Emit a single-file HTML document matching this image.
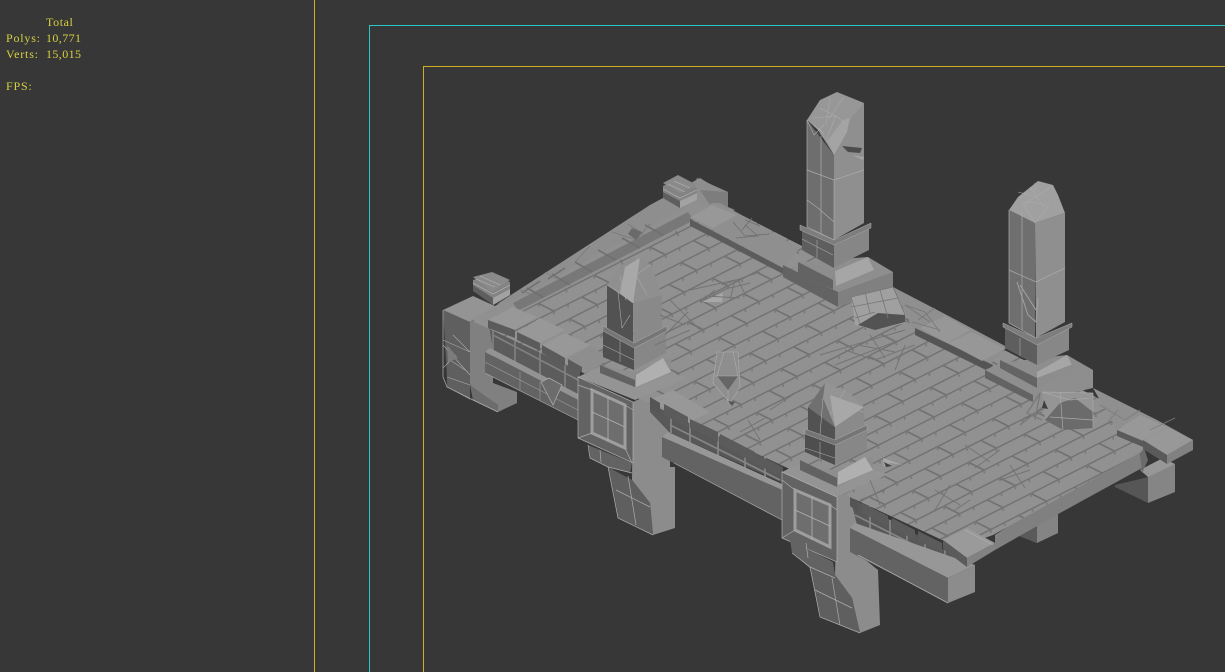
<!DOCTYPE html>
<html><head><meta charset="utf-8"><style>
html,body{margin:0;padding:0;background:#373737;overflow:hidden}
#p{position:relative;width:1225px;height:672px;overflow:hidden;background:#373737}
svg{position:absolute;left:0;top:0}
.f{position:absolute;box-sizing:border-box}
.t{position:absolute;font:12px/14px "Liberation Serif","Noto Serif CJK SC",serif;color:#d8d140;white-space:pre}
</style></head><body><div id="p">
<svg width="1225" height="672" viewBox="0 0 1225 672" fill="none">
<defs>
<pattern id="br" patternUnits="userSpaceOnUse" width="60" height="40" patternTransform="matrix(.93 -.47 .78 .39 700 300)">
<rect width="60" height="40" fill="#919191"/>
<path d="M0 0H60M0 20H60M0 40H60M0 0V20M30 20V40M60 0V20" stroke="#717171" stroke-width="2"/>
<path d="M15 0l-3.500 4.600M45 0l-3.500 4.600M0 20l-3.500 4.600M60 20l-3.500 4.600M30 20l-3.500 4.600M15 40l-3.500 4.600M45 40l-3.500 4.600M30 0l-3.500 4.600" stroke="#787878" stroke-width="1.300"/>
</pattern>
</defs>
<rect x="314" y="0" width="1" height="672" fill="#d0b020"/>
<path d="M369.500 672V25.500H1225" stroke="#28c8c8"/>
<path d="M423.500 672V66.500H1225" stroke="#d0b020"/>

<!-- back right small leg + beam -->
<path d="M1115 485L1148 477V503L1115 487Z" fill="#565656"/>
<path d="M1142 470L1175 464V492L1148 503V477Z" fill="#858585"/>
<path d="M1148 477L1175 464 1163 458 1140 470Z" fill="#979797"/>
<path d="M1017 535L1037 523 1058 513V533L1037 543Z" fill="#848484"/>
<path d="M1017 535L1037 543V525Z" fill="#5a5a5a"/>

<!-- floor side -->
<path d="M1140 453L1060 492 995 535V550L1060 513 1142 468Z" fill="#808080"/>
<path d="M1142 442L1148 460 1142 473 1140 453Z" fill="#6b6b6b"/>

<!-- left block -->
<path d="M443 310L470 322V400L447 387 447 377Z" fill="#5f5f5f"/>
<path d="M470 322L493 313V383L517 392V403L498 412 473 400 470 383Z" fill="#808080"/>
<path d="M473 400L498 412V405L470 385Z" fill="#6c6c6c"/>
<path d="M443 310L473 296 497 307 470 322Z" fill="#949494"/>
<path d="M443 310V377L447 387 473 400 498 412" stroke="#b2b2b2" stroke-width=".7"/>
<path d="M443 340L470 352M447 377L470 385M443 345L470 375M456 355L443 368M470 352L453 335M450 360L468 372" stroke="#ababab" stroke-width=".6"/>
<path d="M447 345L458 358 448 362Z" fill="#7c7c7c"/>

<!-- left wall and beam -->
<path d="M488 320L580 368V397L493 350Z" fill="#5c5c5c"/>
<path d="M493 350V326M515 337V362M540 350V375M565 362V390M493 335L580 381" stroke="#818181" stroke-width="1.600"/>
<path d="M485 352L490 348 580 395 578 400Z" fill="#939393"/>
<path d="M485 352L578 400V420L485 373Z" fill="#636363"/>
<path d="M485 362L578 410M520 372V390M540 382V400" stroke="#9a9a9a" stroke-width=".6"/>
<path d="M485 373L578 420" stroke="#aaa" stroke-width=".7"/>
<path d="M541 382L553 405 562 385 549 378Z" stroke="#aaa" stroke-width=".8" fill="#6c6c6c"/>

<!-- block columns (behind beams) -->
<path d="M633 402L650 394 670 415V467H675V528L653 535 650 503 632 480Z" fill="#8c8c8c"/>
<path d="M837 497L850 491 857 507V553L878 570 880 625 860 633 852 598 835 575Z" fill="#8c8c8c"/>

<!-- front walls/beams -->
<path d="M650 400L783 467V483L670 433 650 412Z" fill="#585858"/>
<path d="M671 408V433M690 419V448M718 432V457M745 445V473M765 456V484M670 425L780 480" stroke="#858585" stroke-width="1.700"/>
<path d="M662 437L668 432 782 484V490Z" fill="#979797"/>
<path d="M662 437L782 490V520L662 457Z" fill="#636363"/>
<path d="M674 463L782 520" stroke="#aaa" stroke-width=".7"/>
<path d="M850 497L967 563 957 572 857 525Z" fill="#585858"/>
<path d="M870 505V533M890 520V545M907 530V553M925 538V565M945 550V572M855 515L960 568" stroke="#858585" stroke-width="1.700"/>
<path d="M850 528L855 523 975 565 948 578Z" fill="#979797"/>
<path d="M850 528L948 578V603L850 552Z" fill="#636363"/>
<path d="M948 578L975 565V592L948 603Z" fill="#8c8c8c"/>
<path d="M858 555L948 603" stroke="#b0b0b0" stroke-width=".8"/>

<!-- floor -->
<path d="M470 320L700 190 728 208 1160 430 1140 453 993 535 965 545 942 540Z" fill="url(#br)"/>
<!-- back-left strip -->
<path d="M470 320L497 307 700 195 735 210 690 224 520 312 490 322Z" fill="#909090"/>
<path d="M513 303L688 212 694 220 518 311Z" fill="#787878"/>
<path d="M497 304L650 205 700 178 716 188 690 205 513 300Z" fill="#8e8e8e"/>
<path d="M527 288L543 297M552 274L570 285M575 262L592 272M598 250L616 260M622 238L640 248M645 225L663 235M540 281L522 293M565 268L548 279" stroke="#707070" stroke-width="1.600"/>
<path d="M612 232L636 240 650 224M628 224L645 235M520 290L535 296M575 262L590 246M545 272L562 282" stroke="#777" stroke-width=".7"/>
<path d="M628 234L636 240 642 232 632 228Z" fill="#6a6a6a"/>
<!-- top back block -->
<path d="M697 178L728 192V208L716 212 690 198Z" fill="#8e8e8e"/>
<path d="M728 192V208L716 214 700 190Z" fill="#7d7d7d"/>

<!-- back-right slabs -->
<path d="M712 203H720L800 248 783 268 690 218Z" fill="#8f8f8f"/>
<path d="M690 217L712 205 737 215 713 228Z" fill="#989898"/>
<path d="M690 219L713 231 783 268V274L712 237 690 226Z" fill="#5c5c5c"/>
<path d="M733 222L745 236 770 234M745 225L758 236 736 238M752 218L742 230M760 226L745 220" stroke="#6e6e6e" stroke-width=".8"/>
<path d="M893 287L943 313 1007 347 985 370 915 332Z" fill="#8f8f8f"/>
<path d="M915 328L993 365 990 372 915 335Z" fill="#555"/>
<path d="M920 328L945 316 970 330 947 343Z" fill="#979797"/>
<path d="M948 343L972 332 1005 349 982 361Z" fill="#979797"/>
<path d="M905 305L925 312 940 332M918 320L935 308" stroke="#777" stroke-width=".8"/>
<!-- end strip -->
<path d="M1093 388L1157 420 1193 440 1167 455 1117 430Z" fill="#8f8f8f"/>
<path d="M1117 430L1140 415 1167 427 1142 440Z" fill="#989898"/>
<path d="M1143 440L1168 427 1193 440 1167 455Z" fill="#989898"/>
<path d="M1143 440L1167 455V464L1143 449Z" fill="#5a5a5a"/>
<path d="M1117 430L1143 441V447L1117 436Z" fill="#5a5a5a"/>
<path d="M1167 455L1193 440V450L1167 464Z" fill="#818181"/>
<path d="M1100 405L1125 420 1140 410M1118 410L1108 422M1150 430L1175 418" stroke="#7d7d7d" stroke-width=".8"/>

<!-- front-left slabs -->
<path d="M488 320L513 307 537 317 515 330Z" fill="#989898"/><path d="M488 320L515 330V338L488 328Z" fill="#5b5b5b"/>
<path d="M517 332L540 318 565 330 540 343Z" fill="#989898"/><path d="M517 332L540 343V351L517 340Z" fill="#5b5b5b"/>
<path d="M542 345L565 333 590 345 565 358Z" fill="#989898"/><path d="M542 345L565 358V366L542 353Z" fill="#5b5b5b"/>
<path d="M568 359L590 346 610 358 590 372Z" fill="#8e8e8e"/><path d="M568 359L582 367V373L568 366Z" fill="#5b5b5b"/>
<path d="M650 400L673 390 710 412 688 423Z" fill="#989898"/><path d="M650 397L660 403V413L650 408Z" fill="#555"/><path d="M664 404L688 417V428L664 415Z" fill="#5b5b5b"/>
<path d="M690 419L718 432V442L690 428Z" fill="#5b5b5b"/>
<path d="M720 434L755 452V463L720 445Z" fill="#5b5b5b"/>
<path d="M752 452L780 467V476L752 462Z" fill="#5b5b5b"/>
<path d="M850 497L858 502V512L850 506Z" fill="#555"/>
<path d="M862 503L888 516V526L862 513Z" fill="#5b5b5b"/>
<path d="M892 518L915 530V540L892 528Z" fill="#5b5b5b"/>
<path d="M918 531L942 543V552L918 541Z" fill="#5b5b5b"/>
<path d="M943 540L967 528 995 543 967 558Z" fill="#9a9a9a"/>
<path d="M943 540L967 558V567L943 549Z" fill="#5b5b5b"/>
<path d="M967 558L995 543V550L967 567Z" fill="#828282"/>
<path d="M965 530L993 545" stroke="#bbb" stroke-width=".5"/>

<!-- small top-left pedestal -->
<path d="M473 280V288L493 305 510 295V282L492 275Z" fill="#838383"/>
<path d="M473 285L493 298V305L473 291Z" fill="#5e5e5e"/>
<path d="M493 298L510 289V295L493 305Z" fill="#a2a2a2"/>
<path d="M473 277L492 272 510 280 492 292Z" fill="#8a8a8a"/>
<path d="M476 279L495 287M480 276L500 285M473 283L493 294 510 285" stroke="#b8b8b8" stroke-width=".6"/>
<!-- small top pedestal -->
<path d="M663 186V196L680 208 697 200V188L678 178Z" fill="#838383"/>
<path d="M663 192L680 201V208L663 198Z" fill="#5e5e5e"/>
<path d="M680 201L697 193V200L680 208Z" fill="#a2a2a2"/>
<path d="M663 183L678 175 697 185 680 193Z" fill="#8a8a8a"/>
<path d="M668 184L685 192M674 181L690 188M663 189L680 198 697 190" stroke="#b8b8b8" stroke-width=".6"/>

<!-- pillar 1 base -->
<path d="M783 277L838 307 893 287V272L868 257 800 262Z" fill="#8e8e8e"/>
<path d="M783 277L838 307V292L783 265Z" fill="#636363"/>
<path d="M838 307L893 287V272L838 292Z" fill="#808080"/>
<path d="M798 262L835 270 874 262V272L833 289 798 275Z" fill="#8d8d8d"/>
<path d="M798 262L833 280V289L798 275Z" fill="#636363"/>
<path d="M835 271L868 257 874 270 836 286Z" fill="#a6a6a6"/>
<path d="M802 250L833 268 869 250V228L834 243 802 228Z" fill="#868686"/>
<path d="M802 228L834 243V268L802 250Z" fill="#5e5e5e"/>
<path d="M817 240V258M802 239L833 255" stroke="#a6a6a6" stroke-width=".6"/>
<!-- pillar 1 shaft -->
<path d="M807 120L834 155V240L807 227Z" fill="#6e6e6e"/>
<path d="M834 155L845 120 864 103V223L834 240Z" fill="#8f8f8f"/>
<path d="M807 120L820 100 837 92 864 103 846 124 834 155 818 130Z" fill="#979797"/>
<path d="M812 129L828 140 843 120 850 118 847 132 834 155 826 138Z" fill="#a4a4a4"/>
<path d="M820 108L836 116 846 124M830 97L826 124M844 97L828 120M812 118L836 116 826 140M814 125L824 134 818 128M807 120L814 135 824 125" stroke="#ababab" stroke-width=".6"/>
<path d="M807 120V227L834 240M821 136V233M807 170L834 180 864 170M807 200L818 208 834 222M834 180V240" stroke="#ababab" stroke-width=".7"/>
<path d="M842 146L862 148 860 153 848 152Z" fill="#4c4c4c"/>
<path d="M852 155L864 157 863 160Z" fill="#a5a5a5"/>
<path d="M800 225L834 240 871 223V228L834 245 800 230Z" fill="#7d7d7d" stroke="#aaa" stroke-width=".5"/>

<!-- pillar 2 -->
<path d="M985 370L1033 402 1093 388V370L1067 355 1000 363Z" fill="#8e8e8e"/>
<path d="M985 370L1033 395V402L985 378Z" fill="#636363"/>
<path d="M1000 360L1037 378V388L1000 368Z" fill="#646464"/>
<path d="M1037 372L1067 355 1073 367 1037 382Z" fill="#a6a6a6"/>
<path d="M1037 378L1073 364V372L1037 388Z" fill="#8d8d8d"/>
<path d="M1005 348L1037 365 1069 350V326L1037 342 1005 326Z" fill="#878787"/>
<path d="M1005 326L1037 342V365L1005 348Z" fill="#5e5e5e"/>
<path d="M1020 338V356" stroke="#a6a6a6" stroke-width=".6"/>
<path d="M1009 210L1035 223V338L1009 323Z" fill="#6f6f6f"/>
<path d="M1035 223L1065 213V322L1036 338Z" fill="#8f8f8f"/>
<path d="M1009 210L1018 197 1038 181 1053 185 1058 195 1065 213 1035 223Z" fill="#a0a0a0"/>
<path d="M1009 210V323L1036 338M1022 210V330M1009 270L1036 282 1065 268" stroke="#aaa" stroke-width=".7"/>
<path d="M1022 201L1049 205M1030 187L1044 207M1049 188L1022 206M1018 192L1038 197M1035 183V194M1022 201L1035 223 1049 205" stroke="#ababab" stroke-width=".6"/>
<path d="M1017 282L1028 315 1036 322 1038 298M1020 285L1036 310" stroke="#a3a3a3" stroke-width="1"/>
<path d="M1003 323L1036 338 1072 323V327L1037 345 1003 327Z" fill="#7d7d7d" stroke="#aaa" stroke-width=".5"/>

<!-- rock 1 -->
<path d="M851 297L893 287 905 315V323L875 330 855 325Z" fill="#a0a0a0"/>
<path d="M858 325L878 313 905 315V322L875 330Z" fill="#535353"/>
<path d="M851 297L893 287 905 315M851 297L860 324M865 292L870 313M851 307L898 298M880 290L888 318M855 318L875 312" stroke="#777" stroke-width=".8"/>
<path d="M905 305L930 322M912 322L940 330" stroke="#777" stroke-width=".8"/>

<!-- rock 2 -->
<path d="M1042 392L1093 393V428L1063 430 1045 420Z" fill="#959595"/>
<path d="M1045 420L1060 403 1075 398 1093 412V428L1063 430Z" fill="#6b6b6b"/>
<path d="M1042 392L1093 393M1042 392L1070 400 1090 398M1060 392L1063 430M1093 393V428M1050 417L1093 420" stroke="#a9a9a9" stroke-width=".7"/>
<path d="M1040 393L1027 413 1042 420M1040 393L1035 420M1020 425L1045 405M1012 424L1042 412" stroke="#777" stroke-width="1.200"/>
<path d="M1044 400L1048 409 1042 408Z" fill="#3f3f3f"/>

<!-- block A -->
<path d="M578 377L600 366 636 388 672 373 688 378 635 400Z" fill="#949494"/>
<path d="M578 377L633 402V463L578 438Z" fill="#636363"/>
<path d="M592 390L625 405V448L592 433Z" fill="#6e6e6e" stroke="#9e9e9e" stroke-width="3"/>
<path d="M608 397V441M592 412L625 427" stroke="#b2b2b2" stroke-width=".8"/>
<path d="M578 377L633 402V463L578 438ZM578 385L592 390M625 405L633 410M592 433L578 438M625 448L632 463" stroke="#adadad" stroke-width=".7"/>
<path d="M588 445L632 463 630 473 608 467 590 458Z" fill="#636363"/>
<path d="M608 467L632 480 650 503 653 535 618 518Z" fill="#5f5f5f"/>
<path d="M588 445L590 458 608 467 618 518 653 535M608 467L632 473M616 490L650 507M628 476L636 525M600 450L601 462" stroke="#adadad" stroke-width=".7"/>

<!-- pillar 3 -->
<path d="M600 365L635 387 671 373V358L634 372Z" fill="#8e8e8e"/>
<path d="M600 365L635 380V387L600 373Z" fill="#626262"/>
<path d="M636 375L663 358 671 372 636 387Z" fill="#b0b0b0"/>
<path d="M603 357L634 370 666 353V328L634 345 603 328Z" fill="#878787"/>
<path d="M603 328L634 345V370L603 357Z" fill="#505050"/>
<path d="M620 340V362M603 345L634 360" stroke="#a6a6a6" stroke-width=".6"/>
<path d="M607 285L633 303V343L607 328Z" fill="#525252"/>
<path d="M633 303L662 295V330L634 343Z" fill="#898989"/>
<path d="M607 285L622 265 637 257 651 265 662 295 633 303Z" fill="#8f8f8f"/>
<path d="M625 267L640 258 633 303 620 293Z" fill="#a8a8a8"/>
<path d="M620 276L626 300M637 257L633 303M630 264L647 295M650 265L620 287M607 285L620 293 633 303M618 292L622 328M630 315L622 328" stroke="#aaa" stroke-width=".6"/>
<path d="M603 326L634 343 667 326V331L634 348 603 331Z" fill="#767676" stroke="#aaa" stroke-width=".5"/>

<!-- rock 3 -->
<path d="M717 352H738L740 387 730 403 713 383Z" fill="#8e8e8e"/>
<path d="M717 376H738L728 390Z" fill="#666"/>
<path d="M717 352H738L740 387 730 403 713 383ZM713 376H740M724 352L717 376M733 352L738 376M728 390V403" stroke="#adadad" stroke-width=".6"/>
<path d="M728 401L732 406 735 402Z" fill="#555"/>

<!-- block B -->
<path d="M782 472L798 464 837 487 873 470 888 474 837 497Z" fill="#949494"/>
<path d="M782 472L837 497V562L782 538Z" fill="#636363"/>
<path d="M795 490L830 505V547L795 530Z" fill="#6e6e6e" stroke="#9e9e9e" stroke-width="3"/>
<path d="M812 497V540M795 510L830 526" stroke="#b2b2b2" stroke-width=".8"/>
<path d="M782 472L837 497V562L782 538ZM782 480L795 490M830 505L837 510M795 530L782 538" stroke="#adadad" stroke-width=".7"/>
<path d="M790 540L833 562 835 575 812 570 792 553Z" fill="#636363"/>
<path d="M810 567L835 575 852 598 860 633 820 617Z" fill="#5f5f5f"/>
<path d="M792 553L810 567 820 617 860 633M810 567L835 578M815 590L852 608M832 578L840 625M806 543L808 558" stroke="#adadad" stroke-width=".7"/>

<!-- pillar 4 -->
<path d="M800 467L837 487 873 470V457L837 470Z" fill="#8e8e8e"/>
<path d="M800 460L837 478V487L800 470Z" fill="#626262"/>
<path d="M838 472L865 457 873 470 838 485Z" fill="#b0b0b0"/>
<path d="M805 452L835 465 867 450V427L835 442 805 432Z" fill="#878787"/>
<path d="M805 430L835 442V465L805 452Z" fill="#4e4e4e"/>
<path d="M820 442V460M805 448L835 458" stroke="#a6a6a6" stroke-width=".6"/>
<path d="M808 407L835 427V440L808 430Z" fill="#525252"/>
<path d="M835 427L864 407V427L835 440Z" fill="#8a8a8a"/>
<path d="M808 407L825 383 850 393 864 407 835 427Z" fill="#949494"/>
<path d="M808 407L825 383 823 398 835 427Z" fill="#707070"/>
<path d="M830 395L864 407 835 427Z" fill="#a8a8a8"/>
<path d="M845 390L830 415M835 405L864 412M823 398L820 435" stroke="#aaa" stroke-width=".6"/>
<path d="M805 429L835 440 867 425V430L835 445 805 434Z" fill="#757575" stroke="#aaa" stroke-width=".5"/>

<!-- floor debris -->
<path d="M702 302L723 293 722 302Z" fill="#a8a8a8"/>
<g stroke="#747474" stroke-width="1">
<path d="M700 302L730 287M705 296L740 298M690 290L735 280 730 300M715 290L700 303M722 285L745 277 760 272M730 288L750 283M738 280L744 292"/>
<path d="M820 355L905 330M835 365L900 340M845 350L875 360M858 345L895 352M870 335L885 358"/>
<path d="M660 315L685 325M670 300L700 330M688 312L665 335M655 345L690 330"/>
<path d="M800 390L770 410"/>
<path d="M965 445L990 462M975 468L1000 450M935 490L960 505M950 485L935 510M955 510L970 500"/>
<path d="M1000 480L1030 470M1010 465L1025 488"/>
<path d="M875 360L915 345M895 370L905 345"/>
<path d="M860 500L885 490M870 480L880 505"/>
<path d="M740 432L765 418M748 420L760 440"/>
</g>
<path d="M883 458L903 465 890 463 884 467Z" fill="#a8a8a8"/>
<path d="M884 462L892 466 886 467Z" fill="#404040"/>
</svg>
<div class="t" style="left:46px;top:15px;letter-spacing:.6px">Total</div>
<div class="t" style="left:6px;top:31px;letter-spacing:.8px">Polys:</div>
<div class="t" style="left:46px;top:31px;letter-spacing:.4px">10,771</div>
<div class="t" style="left:6px;top:47px;letter-spacing:.8px">Verts:</div>
<div class="t" style="left:46px;top:47px;letter-spacing:.4px">15,015</div>
<div class="t" style="left:6px;top:79px;letter-spacing:.8px">FPS:</div>
</div></body></html>
